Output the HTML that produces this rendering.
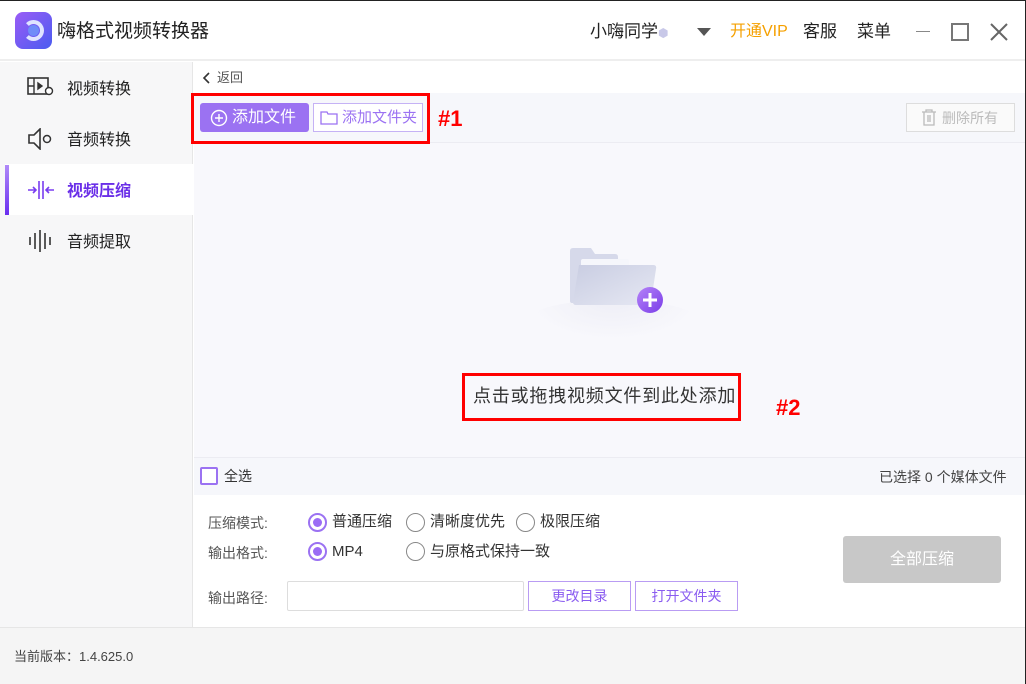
<!DOCTYPE html><html><head><meta charset="utf-8"><style>
*{margin:0;padding:0;box-sizing:border-box}
body{width:1026px;height:684px;overflow:hidden;font-family:"Liberation Sans","Noto Sans CJK SC",sans-serif;background:#fff;position:relative;color:#333}
.a{position:absolute;line-height:1.2}
.win{position:absolute;left:0;top:0;width:1026px;height:684px;border:1px solid #222;border-bottom:none;border-left:none}
</style></head><body>
<div class="a" style="left:0;top:0;width:1026px;height:61px;background:#fff;border-bottom:2px solid #eee"></div>
<div class="a" style="left:15px;top:12px;width:37px;height:37px;border-radius:8px;background:linear-gradient(135deg,#9a5cf6,#4a5cf0)">
<div class="a" style="left:8px;top:8px;width:21px;height:21px;border-radius:50%;border:4px solid #dfe4ff;border-left-color:transparent"></div>
<div class="a" style="left:13px;top:13px;width:11px;height:11px;border-radius:50%;background:#6f8cf8"></div></div>
<div class="a" style="left:57px;top:21px;font-size:19px;color:#222">嗨格式视频转换器</div>
<div class="a" style="left:590px;top:22px;font-size:17px;color:#222">小嗨同学<span style="color:#c8c8e8;font-size:12px">⬢</span></div>
<div class="a" style="left:697px;top:28px;width:0;height:0;border-left:7px solid transparent;border-right:7px solid transparent;border-top:8px solid #555"></div>
<div class="a" style="left:730px;top:22px;font-size:16px;color:#f5a000">开通VIP</div>
<div class="a" style="left:803px;top:22px;font-size:17px;color:#222">客服</div>
<div class="a" style="left:857px;top:22px;font-size:17px;color:#222">菜单</div>
<div class="a" style="left:916px;top:31px;width:14px;height:1px;background:#888"></div>
<div class="a" style="left:951px;top:23px;width:18px;height:18px;border:2px solid #777"></div>
<svg class="a" style="left:989px;top:22px" width="20" height="20"><path d="M2 2L18 18M18 2L2 18" stroke="#666" stroke-width="2"/></svg>
<!-- sidebar -->
<div class="a" style="left:0;top:62px;width:193px;height:565px;background:#f7f7f8;border-right:1px solid #e6e6e6"></div>
<div class="a" style="left:5px;top:164px;width:188px;height:51px;background:#fff"></div>
<div class="a" style="left:5px;top:165px;width:4px;height:50px;background:linear-gradient(#b08af8,#6a2ef0)"></div>
<svg class="a" style="left:27px;top:77px" width="28" height="20"><rect x="1" y="1" width="20" height="16" fill="none" stroke="#333" stroke-width="1.6"/><path d="M7 1V17M1 9H7M11 6L15 9L11 12Z" stroke="#333" stroke-width="1.4" fill="#333"/><circle cx="22" cy="14" r="3.5" fill="#fff" stroke="#333" stroke-width="1.4"/></svg>
<div class="a" style="left:67px;top:80px;font-size:16px;color:#222">视频转换</div>
<svg class="a" style="left:28px;top:128px" width="26" height="22"><path d="M1 7H6L12 1V21L6 15H1Z" fill="none" stroke="#333" stroke-width="1.6"/><circle cx="19" cy="11" r="3.5" fill="none" stroke="#333" stroke-width="1.5"/></svg>
<div class="a" style="left:67px;top:131px;font-size:16px;color:#222">音频转换</div>
<svg class="a" style="left:27px;top:180px" width="28" height="20"><path d="M1 10H9M6 7L9 10L6 13M12 1V19M16 1V19M19 10H27M22 7L19 10L22 13" stroke="#7a3df0" stroke-width="1.6" fill="none"/></svg>
<div class="a" style="left:67px;top:182px;font-size:16px;color:#6a2ee8;font-weight:bold">视频压缩</div>
<svg class="a" style="left:28px;top:230px" width="26" height="22"><path d="M2 7V15M7 3V19M12 0V22M17 3V19M22 7V15" stroke="#333" stroke-width="1.6"/></svg>
<div class="a" style="left:67px;top:233px;font-size:16px;color:#222">音频提取</div>
<!-- main -->
<svg class="a" style="left:202px;top:72px" width="8" height="12"><path d="M7 1L2 6L7 11" stroke="#333" stroke-width="1.6" fill="none"/></svg>
<div class="a" style="left:217px;top:70px;font-size:13px;color:#555">返回</div>
<div class="a" style="left:194px;top:93px;width:832px;height:50px;background:#f6f7fb;border-bottom:1px solid #ececf2"></div>
<div class="a" style="left:194px;top:143px;width:832px;height:314px;background:#f8f8fc"></div>
<div class="a" style="left:200px;top:103px;width:109px;height:29px;border-radius:3px;background:#9b72f2;color:#fff;font-size:16px;padding:5px 0 0 32px">添加文件</div>
<svg class="a" style="left:210px;top:109px" width="18" height="18"><circle cx="9" cy="9" r="7.5" stroke="#fff" stroke-width="1.4" fill="none"/><path d="M9 5V13M5 9H13" stroke="#fff" stroke-width="1.4"/></svg>
<div class="a" style="left:313px;top:103px;width:110px;height:29px;border:1px solid #c5b2f5;background:#fff;color:#9b72f2;font-size:15px;padding:5px 0 0 28px">添加文件夹</div>
<svg class="a" style="left:320px;top:111px" width="18" height="14"><path d="M1 1H7L8 3H17V13H1Z" fill="none" stroke="#9b72f2" stroke-width="1.3"/></svg>
<div class="a" style="left:191px;top:93px;width:239px;height:51px;border:3px solid #f00"></div>
<div class="a" style="left:438px;top:106px;font-size:22px;font-weight:bold;color:#f00">#1</div>
<div class="a" style="left:906px;top:103px;width:109px;height:29px;border:1px solid #ddd;background:#fafafa;color:#bbb;font-size:14px;padding:6px 0 0 35px">删除所有</div>
<svg class="a" style="left:921px;top:109px" width="16" height="17"><path d="M1 3H15M5 3V1H11V3M3 3V16H13V3M7 6V13M9 6V13" stroke="#bbb" stroke-width="1.3" fill="none"/></svg>
<!-- folder -->
<div class="a" style="left:528px;top:300px;width:170px;height:40px;border-radius:50%;background:radial-gradient(ellipse at top,#eeeef6,transparent 70%)"></div>
<svg class="a" style="left:565px;top:245px" width="110" height="75"><defs><linearGradient id="g" x1="0" y1="0" x2="1" y2="1"><stop offset="0" stop-color="#c9cde2"/><stop offset="1" stop-color="#e6e8f3"/></linearGradient><linearGradient id="p" x1="0" y1="0" x2="1" y2="1"><stop offset="0" stop-color="#b583f8"/><stop offset="1" stop-color="#7a3de8"/></linearGradient></defs>
<path d="M5 6Q5 3 8 3H26L30 9H50Q53 9 53 12V58H7Q5 58 5 56Z" fill="#d6d9ea"/>
<rect x="16" y="14" width="48" height="20" rx="2" fill="#f5f6fb"/>
<path d="M14 20H88Q92 20 91 24L86 57Q85 60 82 60H11Q8 60 8 57Z" fill="url(#g)"/>
<circle cx="85" cy="55" r="13" fill="url(#p)"/><path d="M85 48V62M78 55H92" stroke="#fff" stroke-width="3"/></svg>
<div class="a" style="left:462px;top:373px;width:279px;height:48px;border:3px solid #f00"></div>
<div class="a" style="left:473px;top:386px;font-size:18px;color:#333;letter-spacing:0.8px">点击或拖拽视频文件到此处添加</div>
<div class="a" style="left:776px;top:395px;font-size:22px;font-weight:bold;color:#f00">#2</div>
<!-- select row -->
<div class="a" style="left:194px;top:457px;width:832px;height:38px;background:#f6f7fb;border-top:1px solid #ececf2"></div>
<div class="a" style="left:200px;top:467px;width:18px;height:18px;border:2px solid #9b72f2;border-radius:2px;background:#fff"></div>
<div class="a" style="left:224px;top:468px;font-size:14px;color:#333">全选</div>
<div class="a" style="left:879px;top:469px;font-size:14px;color:#444">已选择 0 个媒体文件</div>
<!-- settings -->
<div style="font-size:14px;color:#555">
<div class="a" style="left:208px;top:515px">压缩模式:</div>
<div class="a" style="left:208px;top:545px">输出格式:</div>
<div class="a" style="left:208px;top:590px">输出路径:</div>
</div>
<style>.r{position:absolute;width:19px;height:19px;border-radius:50%;border:1.5px solid #888;background:#fff}.r.on{border:2px solid #9b72f2}.r.on::after{content:"";position:absolute;left:3px;top:3px;width:9px;height:9px;border-radius:50%;background:#9b6cf5}.t{position:absolute;font-size:15px;color:#333;line-height:1.2}</style>
<div class="r on" style="left:308px;top:513px"></div><div class="t" style="left:332px;top:513px">普通压缩</div>
<div class="r" style="left:406px;top:513px"></div><div class="t" style="left:430px;top:513px">清晰度优先</div>
<div class="r" style="left:516px;top:513px"></div><div class="t" style="left:540px;top:513px">极限压缩</div>
<div class="r on" style="left:308px;top:542px"></div><div class="t" style="left:332px;top:543px">MP4</div>
<div class="r" style="left:406px;top:542px"></div><div class="t" style="left:430px;top:543px">与原格式保持一致</div>
<div class="a" style="left:287px;top:581px;width:237px;height:30px;border:1px solid #ddd;border-radius:2px"></div>
<div class="a" style="left:528px;top:581px;width:103px;height:30px;border:1px solid #b99cf3;color:#8a5cf0;font-size:14px;text-align:center;line-height:28px">更改目录</div>
<div class="a" style="left:635px;top:581px;width:103px;height:30px;border:1px solid #b99cf3;color:#8a5cf0;font-size:14px;text-align:center;line-height:28px">打开文件夹</div>
<div class="a" style="left:843px;top:536px;width:158px;height:47px;background:#c8c8c8;border-radius:3px;color:#fff;font-size:16px;text-align:center;line-height:47px">全部压缩</div>
<!-- status -->
<div class="a" style="left:0;top:627px;width:1026px;height:57px;background:#f5f5f5;border-top:1px solid #e6e6e6"></div>
<div class="a" style="left:14px;top:649px;font-size:13px;color:#444">当前版本：1.4.625.0</div>
<div class="win"></div>
</body></html>
